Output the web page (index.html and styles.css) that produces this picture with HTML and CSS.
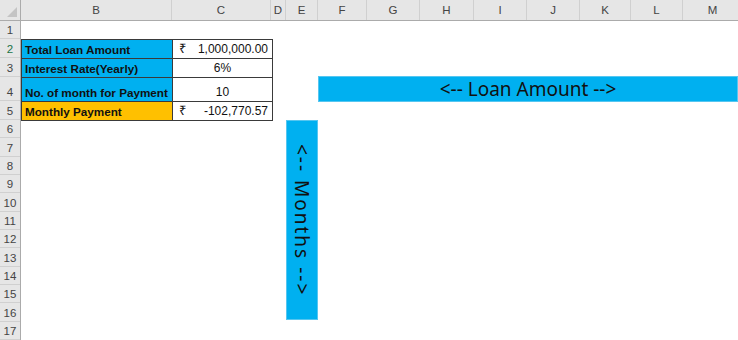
FILE: index.html
```html
<!DOCTYPE html>
<html lang="en">
<head>
    <meta charset="UTF-8">
    <meta name="viewport" content="width=device-width, initial-scale=1.0">
    <title>Loan Payment</title>
    <link rel="stylesheet" href="styles.css">
</head>
<body>

    <div class="head">
        <div class="corner"><span class="tri"></span></div>
        <div class="col cb">B</div>
        <div class="col cc">C</div>
        <div class="col cd">D</div>
        <div class="col ce">E</div>
        <div class="col cf">F</div>
        <div class="col cg">G</div>
        <div class="col ch">H</div>
        <div class="col ci">I</div>
        <div class="col cj">J</div>
        <div class="col ck">K</div>
        <div class="col cl">L</div>
        <div class="col cm">M</div>
    </div>

    <div class="body">

        <div class="rows">
            <div class="rn r18">1</div>
            <div class="rn r19 sel">2</div>
            <div class="rn r19">3</div>
            <div class="rn r24">4</div>
            <div class="rn r19">5</div>
            <div class="rn">6</div>
            <div class="rn">7</div>
            <div class="rn">8</div>
            <div class="rn">9</div>
            <div class="rn">10</div>
            <div class="rn">11</div>
            <div class="rn">12</div>
            <div class="rn">13</div>
            <div class="rn">14</div>
            <div class="rn">15</div>
            <div class="rn">16</div>
            <div class="rn">17</div>
        </div>

        <div class="sheet">

            <table class="calc">
                <colgroup>
                    <col class="k1">
                    <col class="k2">
                </colgroup>
                <tr class="h19">
                    <td class="lbl blue">Total Loan Amount</td>
                    <td class="acc"><span class="cur">₹</span><span class="num">1,000,000.00</span></td>
                </tr>
                <tr class="h19">
                    <td class="lbl blue">Interest Rate(Yearly)</td>
                    <td class="mid">6%</td>
                </tr>
                <tr class="h24">
                    <td class="lbl blue">No. of month for Payment</td>
                    <td class="mid">10</td>
                </tr>
                <tr class="h19">
                    <td class="lbl orange">Monthly Payment</td>
                    <td class="acc"><span class="cur">₹</span><span class="num">-102,770.57</span></td>
                </tr>
            </table>

            <!-- shapes floating over the sheet -->
            <div class="shape loan">&lt;-- Loan Amount --&gt;</div>
            <div class="shape months">&lt;-- Months --&gt;</div>

        </div>

    </div>

</body>
</html>
```

FILE: styles.css
```css
html, body {
    margin: 0;
    padding: 0;
    width: 738px;
    height: 340px;
    overflow: hidden;
    background: #fff;
}

body {
    font-family: "Liberation Sans", Arial, sans-serif;
    color: #1a1a1a;
}

/* column header */

.head {
    display: flex;
    height: 21px;
    background: #e6e6e6;
    border-bottom: 1px solid #ababab;
    box-sizing: border-box;
    white-space: nowrap;
}

.corner {
    position: relative;
    flex: none;
    width: 21px;
    box-sizing: border-box;
    border-right: 1px solid #ababab;
}

.tri {
    position: absolute;
    right: 3px;
    bottom: 3px;
    width: 0;
    height: 0;
    border-left: 10px solid transparent;
    border-bottom: 10px solid #c4c4c4;
}

.col {
    flex: none;
    box-sizing: border-box;
    border-right: 1px solid #d0d0d0;
    font-size: 11.5px;
    color: #444;
    display: flex;
    align-items: center;
    justify-content: center;
}

.cb { width: 151px; }
.cc { width: 99px; }
.cd { width: 15px; }
.ce { width: 32px; }
.cf { width: 49px; }
.cg { width: 53px; }
.ch { width: 54px; }
.ci { width: 53px; }
.cj { width: 53px; }
.ck { width: 51px; }
.cl { width: 52px; }
.cm { width: 60px; }

/* rows */

.body {
    display: flex;
    height: 319px;
}

.rows {
    flex: none;
    width: 21px;
    background: #e6e6e6;
    border-right: 1px solid #ababab;
    box-sizing: border-box;
}

.rn {
    height: 18.33px;
    box-sizing: border-box;
    border-bottom: 1px solid #d0d0d0;
    font-size: 11.5px;
    color: #444;
    display: flex;
    align-items: flex-end;
    justify-content: center;
    padding-bottom: 2px;
}

.r18 { height: 18px; }
.r19 { height: 19px; }
.r24 { height: 24px; }

.sel {
    color: #217346;
}

/* the little calc table */

.sheet {
    position: relative;
    flex: 1;
}

.calc {
    margin-top: 18px;
    border-collapse: collapse;
    table-layout: fixed;
    width: 251px;
    font-size: 11.7px;
    color: #111;
}

.k1 { width: 151px; }
.k2 { width: 100px; }

.calc td {
    border: 1px solid #3a3a3a;
    padding: 0 3px 2px 3px;
    vertical-align: bottom;
    white-space: nowrap;
}

.h19 { height: 19px; }
.h24 { height: 24px; }

.lbl {
    font-weight: bold;
    padding-left: 2px;
}

.blue {
    background: #00b0f0;
}

.orange {
    background: #ffc000;
}

.mid {
    text-align: center;
    font-size: 12px;
}

.cur {
    float: left;
    padding-left: 3px;
    font-size: 13px;
    line-height: 14px;
}

.num {
    float: right;
    padding-right: 1px;
    font-size: 12px;
}

/* shapes */

.shape {
    position: absolute;
    box-sizing: border-box;
    background: #00b0f0;
    border: 1px solid #56c6f0;
    font-family: "Noto Sans", "Open Sans", sans-serif;
    font-size: 19px;
    color: #111;
    display: flex;
    align-items: center;
    justify-content: center;
    white-space: nowrap;
}

.loan {
    left: 297px;
    top: 55px;
    width: 420px;
    height: 26px;
}

.months {
    left: 265px;
    top: 99px;
    width: 32px;
    height: 200px;
    writing-mode: vertical-rl;
    letter-spacing: 2px;
}
```
